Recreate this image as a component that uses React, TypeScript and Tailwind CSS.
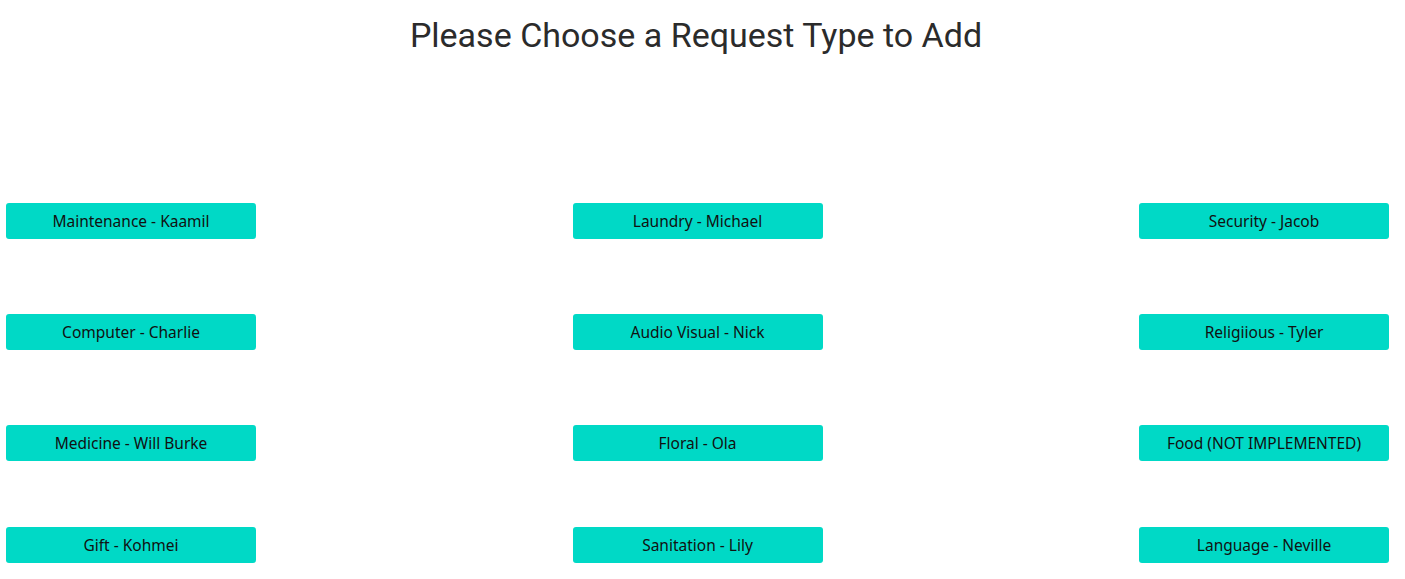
const rows = [
  ['Maintenance - Kaamil', 'Laundry - Michael', 'Security - Jacob'],
  ['Computer - Charlie', 'Audio Visual - Nick', 'Religiious - Tyler'],
  ['Medicine - Will Burke', 'Floral - Ola', 'Food (NOT IMPLEMENTED)'],
  ['Gift - Kohmei', 'Sanitation - Lily', 'Language - Neville'],
]

const rowGaps = ['mt-[149px]', 'mt-[75px]', 'mt-[75px]', 'mt-[66px]']

function RequestButton({ label }: { label: string }) {
  return (
    <button className="w-[250px] h-[36px] pt-[2px] rounded-[3px] bg-[#00d9c6] text-[15.5px] text-[#111] font-['Noto_Sans',sans-serif] flex items-center justify-center">
      {label}
    </button>
  )
}

export default function App() {
  return (
    <div className="w-[1392px] min-h-[579px] bg-white">
      {/* Title */}
      <h1 className="pt-[16px] text-center text-[34px] leading-[38px] text-[#2b2b2b] font-['Roboto',sans-serif]">
        Please Choose a Request Type to Add
      </h1>

      {/* Request buttons */}
      <div className="pl-[6px] pr-[3px]">
        {rows.map((row, i) => (
          <div key={i} className={`${rowGaps[i]} flex justify-between`}>
            {row.map((label) => (
              <RequestButton key={label} label={label} />
            ))}
          </div>
        ))}
      </div>
    </div>
  )
}
